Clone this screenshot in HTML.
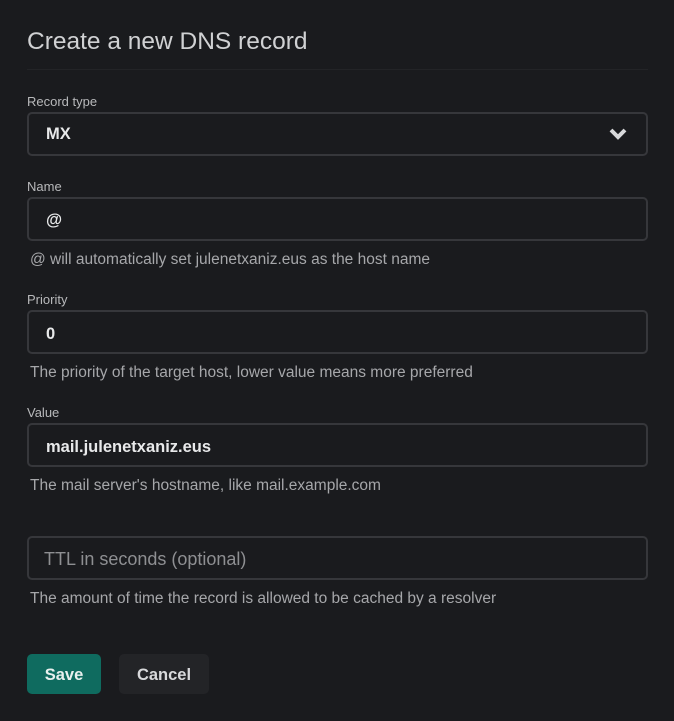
<!DOCTYPE html>
<html><head><style>
body{margin:0;width:674px;height:721px;background:#1a1b1e;font-family:"Liberation Sans",sans-serif;position:relative;overflow:hidden}
.a{position:absolute;white-space:nowrap}
.t{left:27px;top:28px;font-size:24.5px;color:#d0d1d3}
.hr{position:absolute;left:27px;width:621px;top:69px;height:1px;background:#232427}
.l{left:27px;font-size:13px;color:#b8b9bb}
.in{position:absolute;left:27px;width:617px;height:40px;border:2px solid #36373b;border-radius:5px;box-sizing:content-box}
.v{left:46px;font-size:16.5px;font-weight:bold;color:#e8e9ea}
.h{left:30px;font-size:15.5px;color:#a6a7aa}
.b{position:absolute;top:654px;height:40px;border-radius:5px;font-size:16.5px;font-weight:bold;text-align:center;line-height:42px}
</style></head><body>
<div class="a t">Create a new DNS record</div>
<div class="hr"></div>
<div class="a l" style="top:94px">Record type</div>
<div class="in" style="top:112px"></div>
<div class="a v" style="top:125px">MX</div>
<svg class="a" style="left:608px;top:127px" width="20" height="14" viewBox="0 0 20 14"><path d="M3 3l7 7 7-7" fill="none" stroke="#d8d9db" stroke-width="4"/></svg>
<div class="a l" style="top:179px">Name</div>
<div class="in" style="top:197px"></div>
<div class="a v" style="top:211px">@</div>
<div class="a h" style="top:251px">@ will automatically set julenetxaniz.eus as the host name</div>
<div class="a l" style="top:292px">Priority</div>
<div class="in" style="top:310px"></div>
<div class="a v" style="top:325px">0</div>
<div class="a h" style="top:364px">The priority of the target host, lower value means more preferred</div>
<div class="a l" style="top:405px">Value</div>
<div class="in" style="top:423px"></div>
<div class="a v" style="top:438px">mail.julenetxaniz.eus</div>
<div class="a h" style="top:477px">The mail server's hostname, like mail.example.com</div>
<div class="in" style="top:536px"></div>
<div class="a v" style="top:549px;left:44px;font-weight:normal;color:#8e8f92;font-size:18px">TTL in seconds (optional)</div>
<div class="a h" style="top:590px">The amount of time the record is allowed to be cached by a resolver</div>
<div class="b" style="left:27px;width:74px;background:#0f6b5f;color:#e8f0ee">Save</div>
<div class="b" style="left:119px;width:90px;background:#232427;color:#d8d9db">Cancel</div>
</body></html>
